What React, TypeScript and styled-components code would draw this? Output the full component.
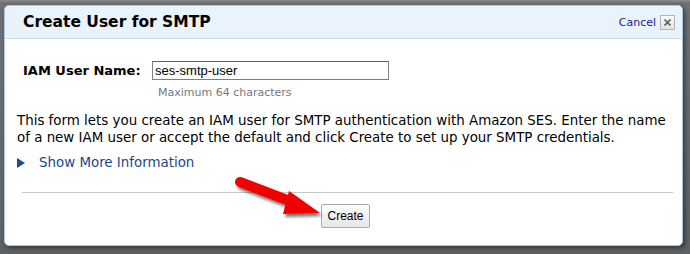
import styled, { createGlobalStyle } from 'styled-components';

const GlobalStyle = createGlobalStyle`
  html, body { margin: 0; padding: 0; }
  body {
    width: 690px;
    height: 254px;
    overflow: hidden;
    background: #6e6f70;
    font-family: "DejaVu Sans", Verdana, sans-serif;
  }
`;

const Backdrop = styled.div`
  width: 690px;
  height: 254px;
  padding: 5px 7px 8px 4px;
  box-sizing: border-box;
  background: linear-gradient(#8a8b8c 0, #6f7071 3px, #5f6061 100%);
`;

const Dialog = styled.div`
  width: 679px;
  height: 241px;
  box-sizing: border-box;
  background: #fff;
  border: 1px solid #a9c9e6;
  border-radius: 5px;
  box-shadow: 2px 2px 4px rgba(0, 0, 0, 0.45);
  overflow: hidden;
  display: flex;
  flex-direction: column;
  position: relative;
`;

const Header = styled.div`
  height: 33px;
  flex: none;
  box-sizing: border-box;
  background: #eaf2fc;
  border-bottom: 1px solid #c3dbf0;
  display: flex;
  align-items: center;
  justify-content: space-between;
  padding: 0 7px 0 18px;
`;

const Title = styled.h2`
  margin: 0;
  font-size: 15.5px;
  font-weight: bold;
  color: #000;
`;

const HeaderActions = styled.div`
  display: flex;
  align-items: center;
  gap: 4px;
`;

const CancelLink = styled.a`
  font-size: 11px;
  color: #1c1c8c;
  text-decoration: none;
`;

const CloseBox = styled.span`
  width: 13px;
  height: 13px;
  border: 1px solid #b4b4b4;
  background: linear-gradient(#fafafa, #e2e2e2);
  display: flex;
  align-items: center;
  justify-content: center;
`;

const Body = styled.div`
  padding: 22px 0 0 12px;
  display: flex;
  flex-direction: column;
`;

const FieldRow = styled.div`
  display: grid;
  grid-template-columns: 129px auto;
  align-items: center;
  padding-left: 6px;
`;

const Label = styled.label`
  font-size: 13px;
  font-weight: bold;
  color: #000;
`;

const Input = styled.input`
  width: 237px;
  height: 19px;
  box-sizing: border-box;
  border: 1px solid #7f7f7f;
  border-top-color: #5e5e5e;
  padding: 0 2px;
  font-family: "Liberation Sans", Arial, sans-serif;
  font-size: 13px;
  color: #000;
  outline: none;
`;

const Hint = styled.div`
  margin: 6px 0 0 141px;
  font-size: 11px;
  color: #777;
`;

const Paragraph = styled.p`
  margin: 13px 0 0;
  font-size: 13.4px;
  line-height: 17px;
  color: #000;
  white-space: nowrap;
`;

const MoreLink = styled.a`
  margin-top: 9px;
  display: flex;
  align-items: center;
  gap: 14px;
  font-size: 13.4px;
  color: #19468e;
  text-decoration: none;
`;

const Triangle = styled.span`
  width: 0;
  height: 0;
  border-top: 5px solid transparent;
  border-bottom: 5px solid transparent;
  border-left: 8px solid #1e4c8c;
`;

const Divider = styled.hr`
  margin: 22px 9px 0 5px;
  border: 0;
  border-top: 1px solid #c8c8c8;
`;

const Footer = styled.div`
  display: flex;
  justify-content: center;
  padding-top: 11px;
  padding-right: 8px;
`;

const Button = styled.button`
  height: 24px;
  padding: 0 5px;
  font-family: "Liberation Sans", Arial, sans-serif;
  font-size: 12px;
  color: #000;
  background: linear-gradient(#fdfdfd, #e6e6e6);
  border: 1px solid #a8a8a8;
  border-radius: 2px;
`;

const Arrow = styled.svg`
  position: absolute;
  left: 226px;
  top: 166px;
  pointer-events: none;
`;

export default function App() {
  return (
    <>
      <GlobalStyle />
      <Backdrop>
        <Dialog>
          <Header>
            <Title>Create User for SMTP</Title>
            <HeaderActions>
              <CancelLink href="#">Cancel</CancelLink>
              <CloseBox>
                <svg width="9" height="9" viewBox="0 0 9 9">
                  <path d="M1.5 1.5 L7.5 7.5 M7.5 1.5 L1.5 7.5" stroke="#555" strokeWidth="1.6" />
                </svg>
              </CloseBox>
            </HeaderActions>
          </Header>
          <Body>
            <FieldRow>
              <Label>IAM User Name:</Label>
              <Input defaultValue="ses-smtp-user" />
            </FieldRow>
            <Hint>Maximum 64 characters</Hint>
            <Paragraph>
              This form lets you create an IAM user for SMTP authentication with Amazon SES. Enter the name
              <br />
              of a new IAM user or accept the default and click Create to set up your SMTP credentials.
            </Paragraph>
            <MoreLink href="#">
              <Triangle />
              Show More Information
            </MoreLink>
            <Divider />
            <Footer>
              <Button>Create</Button>
            </Footer>
          </Body>
          <Arrow width="94" height="48" viewBox="0 0 94 48">
            <defs>
              <filter id="sh" x="-20%" y="-20%" width="150%" height="160%">
                <feDropShadow dx="2" dy="3" stdDeviation="1.5" floodColor="#000" floodOpacity="0.55" />
              </filter>
            </defs>
            <g filter="url(#sh)">
              <path d="M9 10 L64 31" stroke="#f20000" strokeWidth="10" strokeLinecap="round" />
              <path d="M58 19 L89 41 L52 42 Z" fill="#f20000" />
            </g>
          </Arrow>
        </Dialog>
      </Backdrop>
    </>
  );
}
